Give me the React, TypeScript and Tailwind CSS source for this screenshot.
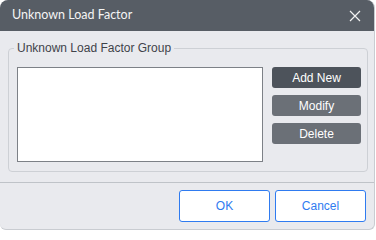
import React from 'react';

const buttons = [
  { label: 'Add New', tone: 'bg-[#4d535b]' },
  { label: 'Modify', tone: 'bg-[#6b7077]' },
  { label: 'Delete', tone: 'bg-[#6b7077]' },
];

export default function App() {
  return (
    <div className="w-[376px] h-[231px] bg-white">
      <div className="w-[375px] h-[230px] flex flex-col rounded-t-[8px] rounded-b-[6px] overflow-hidden bg-[#e9eaee] border-r border-b border-[#c9ccd1]">
        {/* Title bar */}
        <div className="h-[31px] shrink-0 flex items-center justify-between bg-[#575d65] pl-[12px] pr-[12px]">
          <span className="text-[12.5px] text-[#f4f4f4] font-['Lato',sans-serif] leading-none">
            Unknown Load Factor
          </span>
          <svg width="12" height="12" viewBox="0 0 12 12" className="mr-[1px]">
            <path d="M1 1 L11 11 M11 1 L1 11" stroke="#f2f2f2" strokeWidth="1.2" fill="none" />
          </svg>
        </div>

        {/* Group */}
        <fieldset className="mt-[10px] mx-[8px] border border-[#cdd0d5] rounded-[4px] px-0 pt-[12px] pb-[9px]">
          <legend className="ml-[5px] px-[3px] text-[12px] leading-[14px] text-[#3f434a] font-['Liberation_Sans',Arial,sans-serif]">
            Unknown Load Factor Group
          </legend>
          <div className="flex gap-[9px] pl-[8px] pr-[6px]">
            <div className="w-[246px] h-[95px] bg-white border border-[#7d8187]" />
            <div className="flex flex-col gap-[7px]">
              {buttons.map((b) => (
                <button
                  key={b.label}
                  className={`w-[89px] h-[21px] rounded-[3px] ${b.tone} text-white text-[12px] leading-none font-['Liberation_Sans',Arial,sans-serif]`}
                >
                  {b.label}
                </button>
              ))}
            </div>
          </div>
        </fieldset>

        {/* Separator */}
        <div className="mt-[10px] h-px bg-[#bfc3c8]" />

        {/* Footer */}
        <div className="flex justify-end gap-[5px] pr-[8px] pt-[7px]">
          <button className="w-[91px] h-[32px] rounded-[3px] bg-white border border-[#2f7bf0] text-[#2f7bf0] text-[12px] font-['Liberation_Sans',Arial,sans-serif]">
            OK
          </button>
          <button className="w-[91px] h-[32px] rounded-[3px] bg-white border border-[#2f7bf0] text-[#2f7bf0] text-[12px] font-['Liberation_Sans',Arial,sans-serif]">
            Cancel
          </button>
        </div>
      </div>
    </div>
  );
}
